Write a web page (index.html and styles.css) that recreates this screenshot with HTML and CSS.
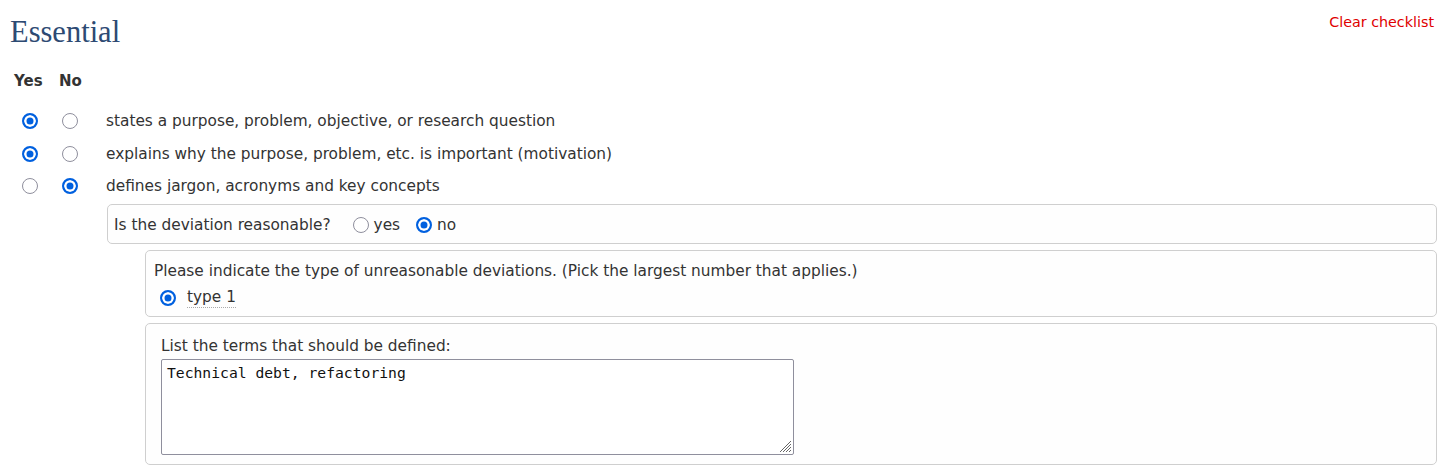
FILE: index.html
```html
<!DOCTYPE html>
<html>
<head>
<meta charset="utf-8">
<link rel="stylesheet" href="styles.css">
</head>
<body>
<div class="page">
  <div class="header">
    <h2 class="title">Essential</h2>
    <a class="clear" href="#">Clear checklist</a>
  </div>
  <div class="cols">
    <span class="col-yes">Yes</span>
    <span class="col-no">No</span>
  </div>
  <div class="items">
    <div class="item">
      <span class="cell"><span class="radio on"></span></span>
      <span class="cell"><span class="radio"></span></span>
      <span class="label">states a purpose, problem, objective, or research question</span>
    </div>
    <div class="item">
      <span class="cell"><span class="radio on"></span></span>
      <span class="cell"><span class="radio"></span></span>
      <span class="label">explains why the purpose, problem, etc. is important (motivation)</span>
    </div>
    <div class="item">
      <span class="cell"><span class="radio"></span></span>
      <span class="cell"><span class="radio on"></span></span>
      <span class="label">defines jargon, acronyms and key concepts</span>
    </div>
  </div>
  <div class="box box-q">
    <span>Is the deviation reasonable?</span>
    <span class="opt first"><span class="radio"></span>yes</span>
    <span class="opt"><span class="radio on"></span>no</span>
  </div>
  <div class="nested">
    <div class="box box-type">
      <div>Please indicate the type of unreasonable deviations. (Pick the largest number that applies.)</div>
      <div class="type-opt"><span class="radio on"></span><span class="dotted">type 1</span></div>
    </div>
    <div class="box box-terms">
      <div class="terms-label">List the terms that should be defined:</div>
      <div class="ta">Technical debt, refactoring<svg class="grip" width="14" height="14" viewBox="0 0 14 14"><path d="M13 2 L2 13 M13 5 L5 13 M13 8 L8 13 M13 11 L11 13" stroke="#666" stroke-width="1"/></svg></div>
    </div>
  </div>
</div>
</body>
</html>
```
FILE: styles.css
```css
* { box-sizing: border-box; }
html, body { margin: 0; padding: 0; background: #fff; }
body {
  font-family: "DejaVu Sans", Verdana, sans-serif;
  font-size: 15.35px;
  color: #333;
}
.page { padding: 0 16px 0 10px; }
.header {
  display: flex;
  justify-content: space-between;
  align-items: flex-start;
}
.title {
  margin: 0;
  padding-top: 13px;
  font-family: "Liberation Serif", Georgia, serif;
  font-weight: normal;
  font-size: 30.5px;
  line-height: 38px;
  color: #2d4a73;
}
.clear {
  margin-top: 12px;
  margin-right: 3px;
  color: #e00000;
  text-decoration: none;
  font-size: 14.3px;
  line-height: 20px;
}
.cols {
  display: flex;
  margin-top: 20px;
  padding-left: 4px;
  font-weight: bold;
  font-size: 15px;
  line-height: 20px;
}
.col-yes { width: 45px; }
.items { margin-top: 14px; }
.item {
  display: flex;
  align-items: center;
  height: 32.5px;
}
.cell {
  width: 40px;
  display: flex;
  justify-content: center;
}
.label { margin-left: 16px; }
.radio {
  display: inline-block;
  width: 16px;
  height: 16px;
  border-radius: 50%;
  border: 1.5px solid #8f8f9d;
  background: #fff;
  flex: none;
}
.radio.on {
  border: 2px solid #0060df;
  box-shadow: inset 0 0 0 2.5px #fff;
  background: #0060df;
}
.box {
  border: 1px solid #cfcfcf;
  border-radius: 5px;
  background: #fefefe;
}
.box-q {
  margin-left: 97px;
  margin-top: 1px;
  height: 40px;
  display: flex;
  align-items: center;
  padding-left: 6px;
  padding-top: 2px;
}
.opt {
  display: inline-flex;
  align-items: center;
  gap: 5px;
  margin-left: 16px;
}
.opt.first { margin-left: 22px; }
.nested {
  margin-left: 135px;
  margin-top: 6px;
  display: flex;
  flex-direction: column;
  gap: 6px;
}
.box-type {
  height: 67px;
  padding: 10px 9px 0 8px;
  line-height: 20px;
}
.type-opt {
  display: flex;
  align-items: center;
  gap: 11px;
  padding-left: 6px;
  margin-top: 7px;
}
.dotted { border-bottom: 1px dotted #aaa; line-height: 19px; }
.box-terms {
  height: 142px;
  padding: 12px 15px 0 15px;
}
.terms-label { line-height: 20px; }
.ta {
  position: relative;
  margin-top: 3px;
  width: 633px;
  height: 96px;
  border: 1px solid #8f8f9d;
  border-radius: 2px;
  background: #fff;
  padding: 3px 5px;
  font-family: "DejaVu Sans Mono", "Liberation Mono", monospace;
  font-size: 14.7px;
  line-height: 19px;
  color: #111;
}
.grip { position: absolute; right: 1px; bottom: 1px; }
```
